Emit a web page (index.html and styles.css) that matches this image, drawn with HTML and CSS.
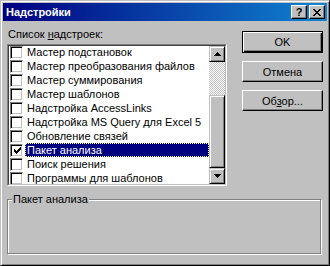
FILE: index.html
```html
<!DOCTYPE html>
<html>

<head>
    <meta charset="UTF-8">
    <title>Надстройки</title>
    <link rel="stylesheet" href="styles.css">
</head>

<body>
    <div class="window">
        <div class="titlebar">
            <span class="title">Надстройки</span>
            <button class="tb-btn help">?</button>
            <button class="tb-btn">
                <svg width="8" height="7" viewBox="0 0 8 7" shape-rendering="crispEdges">
                    <path d="M0 0h2v1h-2zM6 0h2v1h-2zM1 1h2v1h-2zM5 1h2v1h-2zM2 2h4v1h-4zM3 3h2v1h-2zM2 4h4v1h-4zM1 5h2v1h-2zM5 5h2v1h-2zM0 6h2v1h-2zM6 6h2v1h-2z" fill="#000"/>
                </svg>
            </button>
        </div>

        <div class="client">
            <div class="main">
                <div class="left">
                    <div class="caption">Список <u>н</u>адстроек:</div>
                    <div class="listbox">
                        <div class="list-inner">
                            <div class="items">
                                <div class="row"><span class="check"></span><span class="label">Мастер подстановок</span></div>
                                <div class="row"><span class="check"></span><span class="label">Мастер преобразования файлов</span></div>
                                <div class="row"><span class="check"></span><span class="label">Мастер суммирования</span></div>
                                <div class="row"><span class="check"></span><span class="label">Мастер шаблонов</span></div>
                                <div class="row"><span class="check"></span><span class="label">Надстройка AccessLinks</span></div>
                                <div class="row"><span class="check"></span><span class="label">Надстройка MS Query для Excel 5</span></div>
                                <div class="row"><span class="check"></span><span class="label">Обновление связей</span></div>
                                <div class="row">
                                    <span class="check">
                                        <svg width="7" height="7" viewBox="0 0 7 7" shape-rendering="crispEdges">
                                            <path d="M6 0h1v1h-1zM5 1h2v1h-2zM0 2h1v1h-1zM4 2h3v1h-3zM0 3h2v1h-2zM3 3h3v1h-3zM0 4h5v1h-5zM1 5h3v1h-3zM2 6h1v1h-1z" fill="#000"/>
                                        </svg>
                                    </span>
                                    <span class="label selected">Пакет анализа</span>
                                </div>
                                <div class="row"><span class="check"></span><span class="label">Поиск решения</span></div>
                                <div class="row"><span class="check"></span><span class="label">Программы для шаблонов</span></div>
                            </div>
                            <div class="scrollbar">
                                <div class="sb-btn">
                                    <svg width="7" height="4" viewBox="0 0 7 4" shape-rendering="crispEdges">
                                        <path d="M3 0h1v1h-1zM2 1h3v1h-3zM1 2h5v1h-5zM0 3h7v1h-7z" fill="#000"/>
                                    </svg>
                                </div>
                                <div class="sb-track"></div>
                                <div class="sb-thumb"></div>
                                <div class="sb-btn">
                                    <svg width="7" height="4" viewBox="0 0 7 4" shape-rendering="crispEdges">
                                        <path d="M0 0h7v1h-7zM1 1h5v1h-5zM2 2h3v1h-3zM3 3h1v1h-1z" fill="#000"/>
                                    </svg>
                                </div>
                            </div>
                        </div>
                    </div>
                </div>

                <div class="buttons">
                    <button class="btn default">OK</button>
                    <button class="btn">Отмена</button>
                    <button class="btn">Об<u>з</u>ор...</button>
                </div>
            </div>

            <div class="group">
                <div class="group-title">Пакет анализа</div>
            </div>
        </div>
    </div>
</body>

</html>
```

FILE: styles.css
```css
body {
    margin: 0;
    font-family: "Liberation Sans", Arial, sans-serif;
    font-size: 11px;
    color: #000;
}

.window {
    box-sizing: border-box;
    width: 330px;
    height: 266px;
    background-color: #c0c0c0;
    border: 1px solid;
    border-color: #c0c0c0 #000 #000 #c0c0c0;
    box-shadow: inset 1px 1px #fff, inset -1px -1px #808080;
    padding: 2px;
}

.titlebar {
    display: flex;
    align-items: center;
    height: 18px;
    padding: 0 2px 0 3px;
    background: linear-gradient(to right, #000080, #1084d0);
}

.title {
    flex: 1;
    color: #fff;
    font-weight: bold;
    line-height: 13px;
}

.tb-btn {
    box-sizing: border-box;
    display: flex;
    align-items: center;
    justify-content: center;
    width: 16px;
    height: 14px;
    margin-left: 2px;
    padding: 0;
    background-color: #c0c0c0;
    border: 1px solid;
    border-color: #fff #000 #000 #fff;
    box-shadow: inset -1px -1px #808080;
    font: bold 11px "Liberation Sans", Arial, sans-serif;
    color: #000;
}

.tb-btn.help {
    margin-left: 0;
    padding-bottom: 1px;
}

.client {
    padding: 7px 4px 0 4px;
}

.main {
    display: flex;
    gap: 15px;
}

.left {
    width: 220px;
}

.caption {
    line-height: 13px;
    padding-left: 1px;
}

.listbox {
    box-sizing: border-box;
    width: 220px;
    height: 142px;
    margin-top: 3px;
    border: 1px solid;
    border-color: #808080 #fff #fff #808080;
}

.list-inner {
    box-sizing: border-box;
    height: 100%;
    display: flex;
    background-color: #fff;
    border: 1px solid;
    border-color: #404040 #c0c0c0 #c0c0c0 #404040;
}

.items {
    flex: 1;
    overflow: hidden;
}

.items .row:first-child {
    margin-top: -1px;
}

.row {
    display: flex;
    align-items: center;
    height: 14px;
    padding-left: 1px;
}

.check {
    box-sizing: border-box;
    display: flex;
    align-items: center;
    justify-content: center;
    width: 13px;
    height: 13px;
    margin-right: 2px;
    background-color: #fff;
    border: 1px solid;
    border-color: #808080 #fff #fff #808080;
    box-shadow: inset 1px 1px #000, inset -1px -1px #c0c0c0;
}

.check svg {
    margin: 1px 0 0 1px;
}

.label {
    box-sizing: border-box;
    flex: 1;
    height: 14px;
    line-height: 12px;
    padding: 0 1px;
    border: 1px solid transparent;
    white-space: nowrap;
}

.label.selected {
    background-color: #000080;
    color: #fff;
    border: 1px dotted #ffff80;
}

.scrollbar {
    display: flex;
    flex-direction: column;
    width: 16px;
}

.sb-btn,
.sb-thumb {
    box-sizing: border-box;
    background-color: #c0c0c0;
    border: 1px solid;
    border-color: #c0c0c0 #000 #000 #c0c0c0;
    box-shadow: inset 1px 1px #fff, inset -1px -1px #808080;
}

.sb-btn {
    display: flex;
    align-items: center;
    justify-content: center;
    height: 16px;
}

.sb-track {
    flex: 1;
    background: repeating-conic-gradient(#c0c0c0 0 25%, #fff 0 50%) 0 0 / 2px 2px;
}

.sb-thumb {
    height: 73px;
}

.buttons {
    display: flex;
    flex-direction: column;
    gap: 8px;
    margin-top: 3px;
}

.btn {
    box-sizing: border-box;
    width: 81px;
    height: 21px;
    padding: 0;
    background-color: #c0c0c0;
    border: 1px solid;
    border-color: #fff #000 #000 #fff;
    box-shadow: inset -1px -1px #808080;
    font: 11px "Liberation Sans", Arial, sans-serif;
    color: #000;
}

.btn.default {
    height: 22px;
    border-color: #000;
    box-shadow: inset 1px 1px #fff, inset -1px -1px #000, inset -2px -2px #808080;
}

.group {
    box-sizing: border-box;
    width: 314px;
    height: 55px;
    margin-top: 13px;
    border: 1px solid #808080;
    box-shadow: 1px 1px #fff, inset 1px 1px #fff;
}

.group-title {
    width: fit-content;
    margin: -7px 0 0 4px;
    padding: 0 1px;
    line-height: 13px;
    background-color: #c0c0c0;
}
```
